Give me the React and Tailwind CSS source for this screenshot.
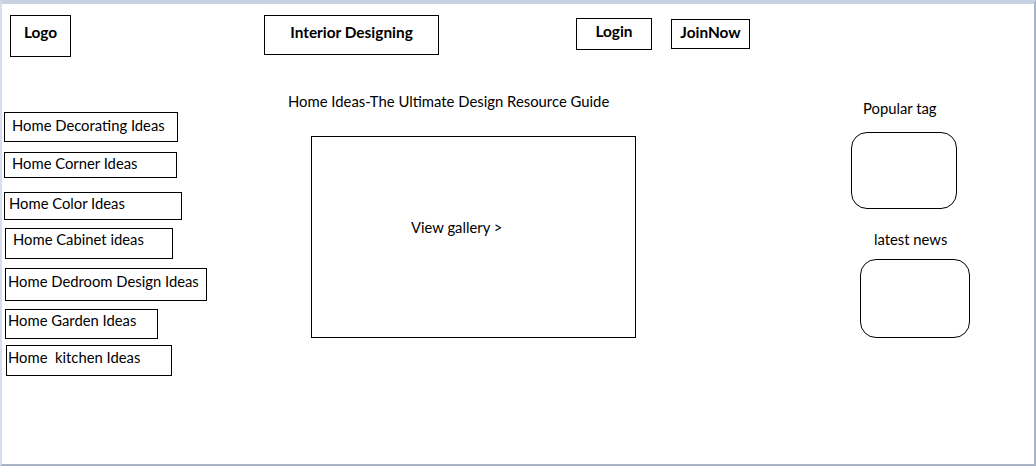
export default function App() {
  const items = [
    { label: "Home Decorating Ideas", cls: "ml-[2px] mt-[55px] w-[174px] h-[30px] pl-[7px] pt-[2px]" },
    { label: "Home Corner Ideas", cls: "ml-[2px] mt-[10px] w-[173px] h-[26px] pl-[7px] pt-[0px]" },
    { label: "Home Color Ideas", cls: "ml-[2px] mt-[14px] w-[178px] h-[28px] pl-[4px] pt-[0px]" },
    { label: "Home Cabinet ideas", cls: "ml-[3px] mt-[8px] w-[168px] h-[31px] pl-[7px] pt-[0px]" },
    { label: "Home Dedroom Design Ideas", cls: "ml-[3px] mt-[9px] w-[202px] h-[33px] pl-[2px] pt-[2px]" },
    { label: "Home Garden Ideas", cls: "ml-[3px] mt-[8px] w-[153px] h-[30px] pl-[2px] pt-[0px]" },
    { label: "Home  kitchen Ideas", cls: "ml-[4px] mt-[6px] w-[166px] h-[31px] pl-[1px] pt-[1px]" },
  ]

  return (
    <div className="w-[1036px] h-[466px] bg-white border-t-4 border-t-[#c8d2e3] border-l-2 border-l-[#d5dff0] border-r-2 border-r-[#aab4c8] border-b-2 border-b-[#aab4c8] text-black font-['Lato',_sans-serif] overflow-hidden">
      {/* header */}
      <div className="flex items-start h-[53px]">
        <div className="ml-[8px] mt-[11px] w-[61px] h-[42px] border border-black flex justify-center pt-[6px] text-[15.4px] font-bold leading-5">
          Logo
        </div>
        <div className="ml-[193px] mt-[11px] w-[175px] h-[40px] border border-black flex justify-center pt-[6px] text-[15.4px] font-bold leading-5">
          Interior Designing
        </div>
        <div className="ml-[137px] mt-[14px] w-[76px] h-[32px] border border-black flex justify-center pt-[2px] text-[15.4px] font-bold leading-5">
          Login
        </div>
        <div className="ml-[19px] mt-[15px] w-[79px] h-[30px] border border-black flex justify-center pt-[2px] text-[15.4px] font-bold leading-5">
          JoinNow
        </div>
      </div>

      {/* main */}
      <div className="flex items-start">
        <div className="w-[210px] flex flex-col items-start">
          {items.map((it) => (
            <div key={it.label} className={`border border-black text-[14.8px] leading-5 whitespace-pre ${it.cls}`}>
              {it.label}
            </div>
          ))}
        </div>

        <div className="ml-[76px] w-[350px] flex flex-col items-start">
          <div className="mt-[34px] text-[14.85px] leading-5 whitespace-nowrap">
            Home Ideas-The Ultimate Design Resource Guide
          </div>
          <div className="ml-[23px] mt-[25px] w-[325px] h-[202px] border border-black pl-[99px] pt-[80px] text-[14.8px] leading-5">
            View gallery &gt;
          </div>
        </div>

        <div className="ml-[213px] flex flex-col items-start">
          <div className="mt-[41px] pl-[12px] text-[14.8px] leading-5">Popular tag</div>
          <div className="mt-[14px] w-[106px] h-[77px] border border-black rounded-[16px]" />
          <div className="mt-[20px] pl-[23px] text-[14.8px] leading-5">latest news</div>
          <div className="ml-[9px] mt-[10px] w-[110px] h-[79px] border border-black rounded-[16px]" />
        </div>
      </div>
    </div>
  )
}
